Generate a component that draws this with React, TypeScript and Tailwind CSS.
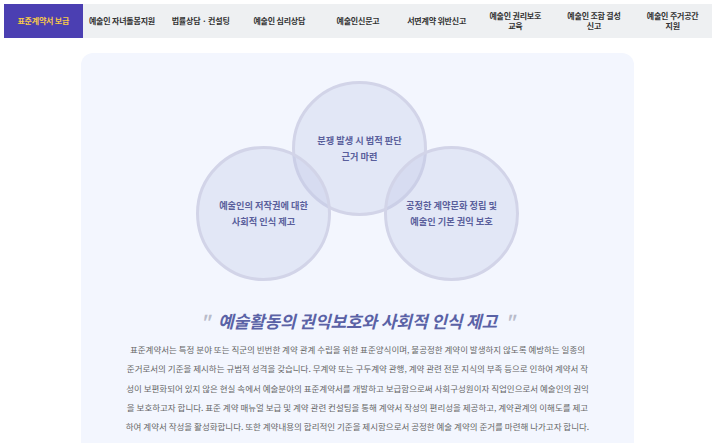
import React from "react";

const tabs: string[][] = [
  ["표준계약서 보급"],
  ["예술인 자녀돌봄지원"],
  ["법률상담 · 컨설팅"],
  ["예술인 심리상담"],
  ["예술인신문고"],
  ["서면계약 위반신고"],
  ["예술인 권리보호", "교육"],
  ["예술인 조합 결성", "신고"],
  ["예술인 주거공간", "지원"],
];

const circles = [
  { left: 96, top: 0, lines: ["분쟁 발생 시 법적 판단", "근거 마련"] },
  { left: 0, top: 65, lines: ["예술인의 저작권에 대한", "사회적 인식 제고"] },
  { left: 188, top: 65, lines: ["공정한 계약문화 정립 및", "예술인 기본 권익 보호"] },
];

const paragraph = [
  "표준계약서는 특정 분야 또는 직군의 빈번한 계약 관계 수립을 위한 표준양식이며, 불공정한 계약이 발생하지 않도록 예방하는 일종의",
  "준거로서의 기준을 제시하는 규범적 성격을 갖습니다. 무계약 또는 구두계약 관행, 계약 관련 전문 지식의 부족 등으로 인하여 계약서 작",
  "성이 보편화되어 있지 않은 현실 속에서 예술분야의 표준계약서를 개발하고 보급함으로써 사회구성원이자 직업인으로서 예술인의 권익",
  "을 보호하고자 합니다. 표준 계약 매뉴얼 보급 및 계약 관련 컨설팅을 통해 계약서 작성의 편리성을 제공하고, 계약관계의 이해도를 제고",
  "하여 계약서 작성을 활성화합니다. 또한 계약내용의 합리적인 기준을 제시함으로서 공정한 예술 계약의 준거를 마련해 나가고자 합니다.",
];

export default function App() {
  return (
    <div
      className="w-[720px] h-[443px] overflow-hidden bg-white"
      style={{ fontFamily: '"Noto Sans CJK KR", "Noto Sans", sans-serif' }}
    >
      {/* Top menu */}
      <nav className="mt-[4px] ml-[4px] w-[708px] h-[34px] bg-[#eef0f2] grid grid-cols-9">
        {tabs.map((t, i) => (
          <div
            key={i}
            className={
              "flex flex-col items-center justify-center text-[8px] leading-[10px] font-bold tracking-[-0.2px] " +
              (i === 0 ? "bg-[#4b3fb2] text-[#f7c948]" : "text-[#333]")
            }
          >
            {t.map((l, j) => (
              <span key={j}>{l}</span>
            ))}
          </div>
        ))}
      </nav>

      {/* Content card */}
      <section className="mt-[15px] ml-[81px] w-[553px] h-[420px] rounded-[12px] bg-[#f3f6fe] pt-[28px]">
        <div className="relative mx-auto w-[323px] h-[199px]">
          {circles.map((c, i) => (
            <div
              key={i}
              className="absolute w-[135px] h-[135px] rounded-full border-[3px] border-[#d2d4e8] bg-[rgba(190,194,228,0.3)] flex flex-col items-center justify-center text-[9.2px] leading-[15.5px] font-bold text-[#5a5f9c]"
              style={{ left: c.left, top: c.top }}
            >
              {c.lines.map((l, j) => (
                <span key={j}>{l}</span>
              ))}
            </div>
          ))}
        </div>

        <h2 className="mt-[29px] text-center text-[17px] leading-[24px] font-bold italic text-[#5a62a6] tracking-[-0.1px]">
          <span className="text-[#b9bccb] mr-[8px]">"</span>
          예술활동의 권익보호와 사회적 인식 제고
          <span className="text-[#b9bccb] ml-[8px]">"</span>
        </h2>

        <div className="mt-[7px] flex flex-col items-center text-[8.5px] leading-[19.3px] text-[#666] whitespace-nowrap">
          {paragraph.map((l, i) => (
            <p key={i}>{l}</p>
          ))}
        </div>
      </section>
    </div>
  );
}
